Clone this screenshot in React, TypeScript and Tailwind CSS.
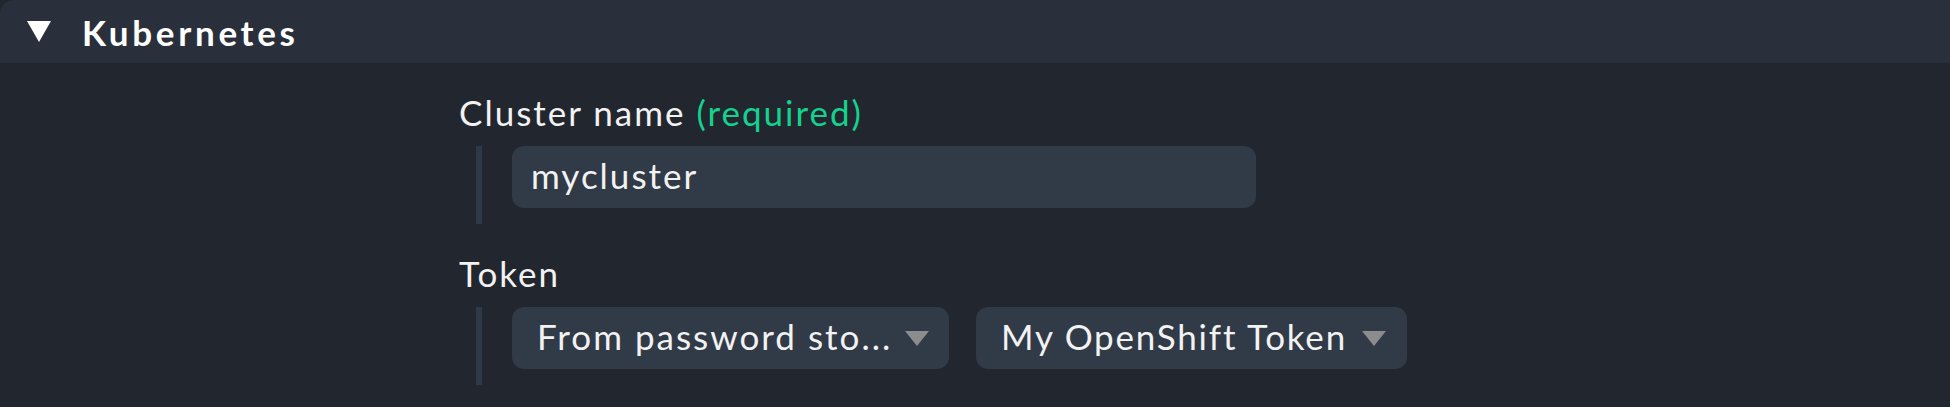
import React from "react";

const Caret = () => (
  <svg width="24" height="15" viewBox="0 0 24 15" className="shrink-0 mt-[4px]">
    <polygon points="0,0 24,0 12,15" fill="#8c8c8c" />
  </svg>
);

const Bar = () => <div className="w-[6px] self-stretch bg-[#2f3946] shrink-0" />;

export default function App() {
  return (
    <div
      className="w-[1950px] h-[407px] bg-[#22272f] text-[#f2f2f2] overflow-hidden"
      style={{ fontFamily: "Lato, 'Open Sans', sans-serif" }}
    >
      <div className="h-[63px] bg-[#29303b] rounded-tl-[14px] flex items-center pl-[27px]">
        <svg width="24" height="21" viewBox="0 0 24 21" className="shrink-0">
          <polygon points="0,0 24,0 12,21" fill="#ffffff" />
        </svg>
        <span className="ml-[31px] text-[35px] leading-[40px] font-bold tracking-[3.7px] text-white">
          Kubernetes
        </span>
      </div>

      <div className="pl-[459px] pt-[29px] text-[35px] tracking-[2px]">
        <div className="leading-[40px]">
          Cluster name <span className="text-[#15d18e]">(required)</span>
        </div>
        <div className="flex mt-[14px] pl-[17px]">
          <Bar />
          <div className="ml-[30px] pb-[16px]">
            <div className="w-[744px] h-[62px] rounded-[12px] bg-[#313a47] flex items-center pl-[19px] pb-[4px]">
              mycluster
            </div>
          </div>
        </div>

        <div className="leading-[40px] mt-[29px]">Token</div>
        <div className="flex mt-[14px] pl-[17px]">
          <Bar />
          <div className="ml-[30px] pb-[16px] flex gap-[27px]">
            <div className="w-[437px] h-[62px] rounded-[12px] bg-[#313a47] flex items-center pl-[25px] pr-[20px] pb-[4px]">
              <span className="flex-1 whitespace-nowrap overflow-hidden">From password sto...</span>
              <Caret />
            </div>
            <div className="h-[62px] rounded-[12px] bg-[#313a47] flex items-center pl-[25px] pr-[21px] pb-[4px]">
              <span className="whitespace-nowrap mr-[15px] tracking-[1.8px]">My OpenShift Token</span>
              <Caret />
            </div>
          </div>
        </div>
      </div>
    </div>
  );
}
